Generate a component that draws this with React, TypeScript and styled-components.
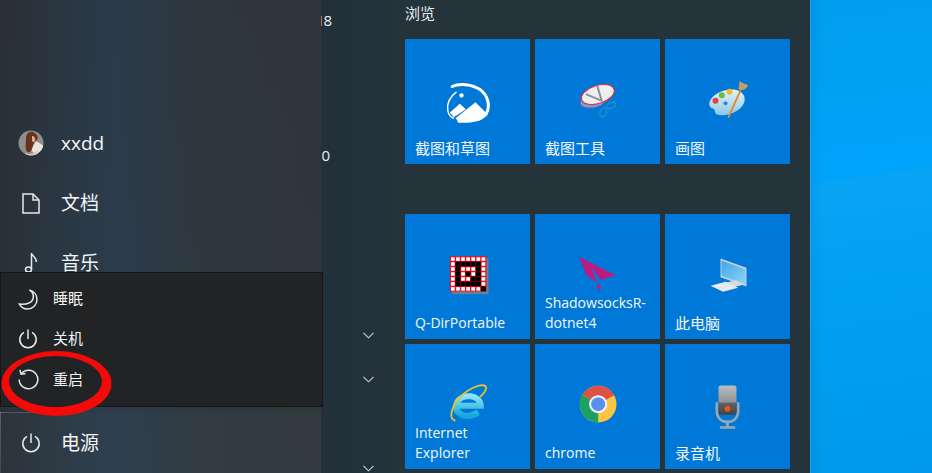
import React from "react";
import styled, { createGlobalStyle } from "styled-components";

const CJK = `"Noto Sans CJK SC"`;
const UI = `"Open Sans", ${CJK}, sans-serif`;

const Global = createGlobalStyle`
  html, body { margin: 0; padding: 0; background: #00a0f2; }
  body { overflow: hidden; font-family: ${UI}; color: #fff; }
`;

const Page = styled.div`
  position: relative;
  display: flex;
  width: 932px;
  height: 473px;
  overflow: hidden;
`;

const StartMenu = styled.div`
  display: flex;
  width: 810px;
  flex: none;
  background: #25333a;
`;

const Sidebar = styled.nav`
  display: flex;
  flex-direction: column;
  width: 321px;
  flex: none;
  padding-top: 113px;
  box-sizing: border-box;
  background:
    linear-gradient(180deg, rgba(36, 40, 44, 0.16) 0%, rgba(36, 50, 58, 0.1) 100%),
    linear-gradient(90deg, #2a3138 0%, #2b3a47 22%, #2c3e50 36%, #2f3a42 58%, #31383a 100%);
`;

const NavRow = styled.div<{ $focused?: boolean }>`
  position: relative;
  display: grid;
  grid-template-columns: 61px 1fr;
  align-items: center;
  height: 60px;
  font-size: 19px;
  line-height: 24px;
  color: #f4f6f7;
  ${(p) => (p.$focused ? "margin-top: auto; background: rgba(255,255,255,.015);" : "")}
  ${(p) =>
    p.$focused
      ? `&::before {
          content: "";
          position: absolute;
          inset: -1px auto auto 0;
          width: 95px;
          height: 61px;
          background:
            linear-gradient(90deg, rgba(255,255,255,.22), rgba(255,255,255,0)) 0 0 / 100% 1px no-repeat,
            linear-gradient(180deg, rgba(255,255,255,.22), rgba(255,255,255,.1)) 0 0 / 1px 100% no-repeat;
        }`
      : ""}
`;

const IconSlot = styled.span`
  display: flex;
  justify-content: center;
  align-items: center;
`;

const AppList = styled.div`
  display: flex;
  flex-direction: column;
  width: 69px;
  flex: none;
  overflow: hidden;
  background: linear-gradient(90deg, #21303a 0%, #24323a 100%);
`;

const AppRow = styled.div<{ $top: number }>`
  display: flex;
  align-items: center;
  height: 40px;
  flex: none;
  margin-top: ${(p) => p.$top}px;
`;

const ClippedText = styled.span<{ $shift: number; $tight?: boolean }>`
  margin-left: ${(p) => p.$shift}px;
  font-size: 15px;
  letter-spacing: ${(p) => (p.$tight ? "-1px" : "0")};
  color: #eef1f2;
  white-space: nowrap;
`;

const ChevronSlot = styled.span`
  display: flex;
  margin-left: 42px;
`;

const TilePane = styled.section`
  flex: 1;
  padding-left: 15px;
`;

const GroupTitle = styled.h2`
  margin: 0;
  height: 39px;
  font-size: 15px;
  font-weight: 400;
  line-height: 26px;
  color: #e8ecee;
`;

const TileGrid = styled.div<{ $top?: number }>`
  display: grid;
  grid-template-columns: repeat(3, 125px);
  grid-auto-rows: 125px;
  gap: 5px;
  margin-top: ${(p) => p.$top ?? 0}px;
`;

const Tile = styled.div`
  display: grid;
  background: #0078d7;
  & > * {
    grid-area: 1 / 1;
  }
`;

const TileIcon = styled.svg`
  width: 48px;
  height: 48px;
  place-self: center;
`;

const TileLabel = styled.div<{ $cjk?: boolean }>`
  align-self: end;
  padding: 0 6px 6px 10px;
  font-size: ${(p) => (p.$cjk ? 15 : 14)}px;
  line-height: 20px;
  color: #f6f9fc;
  word-break: break-word;
`;

const Desktop = styled.div`
  flex: 1;
  box-sizing: border-box;
  border-left: 1px solid #23a6ea;
  background:
    linear-gradient(90deg, rgba(0, 60, 130, 0.09), rgba(0, 60, 130, 0) 12px),
    linear-gradient(172.5deg, #009eed 0%, #00a4fb 37.4%, #0aa4f4 37.8%, #00a0f4 60%, #0099ea 100%);
`;

const PowerMenu = styled.div`
  position: absolute;
  left: 0;
  top: 272px;
  width: 323px;
  height: 135px;
  box-sizing: border-box;
  padding-top: 6px;
  background: #212325;
  border: 1px solid #131516;
`;

const PowerItem = styled.div`
  display: grid;
  grid-template-columns: 52px 1fr;
  align-items: center;
  height: 40px;
  font-size: 15px;
  line-height: 20px;
  color: #f2f3f4;
`;

const PowerLabel = styled.span`
  position: relative;
  top: -1px;
`;

const PowerIconSlot = styled.span`
  display: flex;
  justify-content: center;
  padding-left: 2px;
`;

const Annotation = styled.svg`
  position: absolute;
  left: 0;
  top: 348px;
  width: 116px;
  height: 70px;
  pointer-events: none;
`;

const Line = { fill: "none", stroke: "#e6e9ea", strokeWidth: 1.5 } as const;

const PowerGlyph = ({ size = 20 }: { size?: number }) => (
  <svg width={size} height={size} viewBox="0 0 20 20" style={Line}>
    <path d="M6 3.4A8.2 8.2 0 1 0 14 3.4" />
    <path d="M10 .6V10" />
  </svg>
);

const MoonGlyph = () => (
  <svg width="20" height="21" viewBox="0 0 20 21" style={Line}>
    <path d="M11.5 .9C14.6 3 16.2 6.2 15 9.900C13.6 14 9.300 15.600 1.400 15.100C3.200 18.300 6.200 20 9.500 20C14.800 20 19 15.800 19 10.500C19 6.100 16 2.200 11.500 .9Z" />
  </svg>
);

const RestartGlyph = () => (
  <svg width="21" height="21" viewBox="0 0 21 21" style={Line}>
    <path d="M3.300 4.600A9.300 9.300 0 1 1 1.200 10.500" />
    <path d="M1.800 .9L3.100 5.100L7.600 4.500" />
  </svg>
);

const DocGlyph = () => (
  <svg width="18" height="21" viewBox="0 0 18 21" style={Line}>
    <path d="M1 1H11L17 7V20H1Z" />
    <path d="M11 1V7H17" />
  </svg>
);

const NoteGlyph = () => (
  <svg width="14" height="22" viewBox="0 0 14 22" style={Line}>
    <path d="M7.500 17.500V1C8 4 12.500 5.500 12.500 10" />
    <ellipse cx="4.500" cy="17.500" rx="3" ry="2.500" />
  </svg>
);

const Chevron = () => (
  <svg width="11" height="7" viewBox="0 0 11 7" fill="none" stroke="#c9d0d4" strokeWidth="1.1">
    <path d="M.5 .8L5.500 5.800L10.500 .8" />
  </svg>
);

const Avatar = () => (
  <svg width="26" height="26" viewBox="0 0 26 26">
    <defs>
      <clipPath id="av">
        <circle cx="13" cy="13" r="12.500" />
      </clipPath>
    </defs>
    <g clipPath="url(#av)">
      <rect width="26" height="26" fill="#8e908c" />
      <path d="M19 26C23 23 26 19 26 16L18 11L13 20Z" fill="#ece6de" />
      <path d="M15 2C11 1 8 4 8 8C8 12 7 16 8 20C10 24 13 22 14 19C15 16 15 12 18 11C21 9 20 4 15 2Z" fill="#6a3020" />
      <path d="M14 6C16 6 18 8 17 11C16 13 14 12 14 10Z" fill="#e0ac92" />
      <path d="M7 23C12 25 16 24 20 20L22 26H7Z" fill="#e8c8b4" />
    </g>
  </svg>
);

const SnipIcon = () => (
  <TileIcon viewBox="130.500 232.500 144 144">
    <path d="M155 258C175 248 215 250 240 268C262 285 270 315 258 338C246 358 215 364 175 362" fill="none" stroke="#fff" strokeWidth="9" strokeLinecap="round" />
    <path d="M168 274C148 288 138 310 142 330C144 343 150 350 160 354" fill="none" stroke="#fff" strokeWidth="4.500" />
    <path d="M148 336L178 310L196 326L160 350Z" fill="#fff" />
    <path d="M225 305L262 342C248 358 215 364 172 361L165 353Z" fill="#fff" />
    <circle cx="183" cy="285" r="6.500" fill="#fff" />
  </TileIcon>
);

const ScissorsIcon = () => (
  <TileIcon viewBox="520.500 232.500 144 144">
    <ellipse cx="576" cy="304" rx="37" ry="18" transform="rotate(-8 576 304)" fill="#6aa5df" stroke="#8a5a9a" strokeWidth="2.500" />
    <ellipse cx="592" cy="282" rx="51" ry="27" transform="rotate(-18 592 282)" fill="#eceef0" stroke="#e8303a" strokeWidth="3.500" />
    <path d="M590 255L604 302M556 281L604 301" stroke="#8b9097" strokeWidth="6" fill="none" />
    <ellipse cx="608" cy="336" rx="9" ry="14" transform="rotate(20 608 336)" fill="none" stroke="#1590cf" strokeWidth="5" />
    <ellipse cx="632" cy="315" rx="15" ry="8" transform="rotate(-25 632 315)" fill="none" stroke="#1590cf" strokeWidth="5" />
  </TileIcon>
);

const PaletteIcon = () => (
  <TileIcon viewBox="910.500 232.500 144 144">
    <defs>
      <linearGradient id="pal" x1="0" y1="0" x2="0" y2="1">
        <stop offset="0" stopColor="#e4f2fa" />
        <stop offset="1" stopColor="#8ec8e8" />
      </linearGradient>
    </defs>
    <path d="M928 302C936 280 975 262 1005 268C1032 274 1040 296 1026 316C1012 336 975 350 950 342C940 338 945 326 938 324C928 322 924 312 928 302Z" fill="url(#pal)" />
    <circle cx="945" cy="301" r="9" fill="#e2413e" />
    <circle cx="964" cy="284" r="9" fill="#6fbb3e" />
    <circle cx="987" cy="274" r="9" fill="#f4b92e" />
    <circle cx="975" cy="308" r="6" fill="#2f86cf" />
    <path d="M984 350L1019 272" stroke="#e08a24" strokeWidth="5.500" strokeLinecap="round" />
    <path d="M1014 266L1017 241C1026 250 1036 250 1043 254C1038 264 1026 274 1014 266Z" fill="#c79a66" />
  </TileIcon>
);

const QDIR = ["WWWWWWW", "WKKKKKW", "WKWWWKW", "WKWKWKW", "WKWWKKW", "WKKKKKW", "WWWWWWK"];

const QDirIcon = () => (
  <TileIcon viewBox="130.500 127.500 144 144">
    <rect x="154" y="143" width="110" height="108" fill="#6d7f92" />
    <rect x="148" y="137" width="110" height="106" fill="#f0101c" />
    {QDIR.map((row, y) =>
      row.split("").map((c, x) =>
        c === "W" ? (
          <rect key={`${x}-${y}`} x={151.5 + x * 15.3} y={140.5 + y * 14.9} width="11" height="10.500" fill="#fff" />
        ) : (
          <rect key={`${x}-${y}`} x={149.5 + x * 15.3} y={138.5 + y * 14.9} width="15" height="14.500" fill="#000" />
        )
      )
    )}
  </TileIcon>
);

const PlaneIcon = () => (
  <TileIcon viewBox="520.500 127.500 144 144">
    <path d="M536 139L646 195L600 208L570 166L590 216L558 195Z" fill="#bd1a82" />
    <path d="M587 226L600 219L598 243Z" fill="#bd1a82" />
  </TileIcon>
);

const ComputerIcon = () => (
  <TileIcon viewBox="910.500 127.500 144 144">
    <defs>
      <linearGradient id="scr" x1="0" y1="0" x2="1" y2="1">
        <stop offset="0" stopColor="#3fa6ec" />
        <stop offset="1" stopColor="#8fd4f6" />
      </linearGradient>
    </defs>
    <path d="M960 144L1038 172V228L960 200Z" fill="#c6d0d8" />
    <path d="M963 150L1035 176V222L963 196Z" fill="url(#scr)" />
    <path d="M978 216L1006 209L1032 222L1004 229Z" fill="#d5dce1" />
    <path d="M930 226L976 214L1013 232L968 244Z" fill="#e6eaee" />
  </TileIcon>
);

const IeIcon = () => (
  <TileIcon viewBox="130.500 517.500 144 144">
    <defs>
      <linearGradient id="ie" x1="0" y1="0" x2="0" y2="1">
        <stop offset="0" stopColor="#8be4f7" />
        <stop offset="1" stopColor="#16a6dc" />
      </linearGradient>
    </defs>
    <path d="M170 586H241C239 552 186 548 170 574C156 602 186 632 234 606" fill="none" stroke="url(#ie)" strokeWidth="18" />
    <path d="M163 630C145 628 150 590 180 558C210 530 245 518 256 528C260 535 250 550 240 558" fill="none" stroke="#e6c230" strokeWidth="5.500" strokeLinecap="round" />
  </TileIcon>
);

const ChromeIcon = () => (
  <TileIcon viewBox="520.500 517.500 144 144">
    <circle cx="593" cy="581" r="55" fill="#fbc443" />
    <path d="M593 581L545.400 553.500A55 55 0 0 1 640.600 553.500Z" fill="#de5246" />
    <path d="M593 581L545.400 553.500A55 55 0 0 0 593 636Z" fill="#1ba260" />
    <path d="M593 581L640.600 553.500H593Z" fill="#de5246" />
    <circle cx="593" cy="581" r="27" fill="#f4f6f8" />
    <circle cx="593" cy="581" r="21" fill="#5b8ff0" />
  </TileIcon>
);

const MicIcon = () => (
  <TileIcon viewBox="910.500 517.500 144 144">
    <defs>
      <linearGradient id="mic" x1="0" y1="0" x2="0" y2="1">
        <stop offset="0" stopColor="#b9bdc1" />
        <stop offset=".55" stopColor="#8f9499" />
        <stop offset=".62" stopColor="#5c6064" />
        <stop offset="1" stopColor="#3f4347" />
      </linearGradient>
    </defs>
    <path d="M949 575V600C949 625 965 634 981 634C997 634 1013 625 1013 600V575" fill="none" stroke="#9aa7b0" strokeWidth="8" />
    <rect x="954" y="525" width="54" height="88" rx="7" fill="url(#mic)" />
    <circle cx="981" cy="595" r="9" fill="#ea5514" />
    <path d="M981 634V650M958 651H1004" stroke="#9aa7b0" strokeWidth="8" fill="none" />
  </TileIcon>
);

type TileData = { label: string; icon: React.ReactNode; cjk?: boolean };

const firstGroup: TileData[] = [
  { label: "截图和草图", icon: <SnipIcon />, cjk: true },
  { label: "截图工具", icon: <ScissorsIcon />, cjk: true },
  { label: "画图", icon: <PaletteIcon />, cjk: true },
];

const secondGroup: TileData[] = [
  { label: "Q-DirPortable", icon: <QDirIcon /> },
  { label: "ShadowsocksR-dotnet4", icon: <PlaneIcon /> },
  { label: "此电脑", icon: <ComputerIcon />, cjk: true },
  { label: "Internet Explorer", icon: <IeIcon /> },
  { label: "chrome", icon: <ChromeIcon /> },
  { label: "录音机", icon: <MicIcon />, cjk: true },
];

const renderTile = (t: TileData) => (
  <Tile key={t.label}>
    {t.icon}
    <TileLabel $cjk={t.cjk}>{t.label}</TileLabel>
  </Tile>
);

export default function App() {
  return (
    <Page>
      <Global />
      <StartMenu>
        <Sidebar>
          <NavRow>
            <IconSlot><Avatar /></IconSlot>
            <span>xxdd</span>
          </NavRow>
          <NavRow>
            <IconSlot><DocGlyph /></IconSlot>
            <span>文档</span>
          </NavRow>
          <NavRow>
            <IconSlot><NoteGlyph /></IconSlot>
            <span>音乐</span>
          </NavRow>
          <NavRow $focused>
            <IconSlot><PowerGlyph /></IconSlot>
            <span>电源</span>
          </NavRow>
        </Sidebar>
        <AppList>
          <AppRow $top={0}><ClippedText $shift={-5} $tight>18</ClippedText></AppRow>
          <AppRow $top={95}><ClippedText $shift={-8}>10</ClippedText></AppRow>
          <AppRow $top={140}><ChevronSlot><Chevron /></ChevronSlot></AppRow>
          <AppRow $top={4}><ChevronSlot><Chevron /></ChevronSlot></AppRow>
          <AppRow $top={49}><ChevronSlot><Chevron /></ChevronSlot></AppRow>
        </AppList>
        <TilePane>
          <GroupTitle>浏览</GroupTitle>
          <TileGrid>{firstGroup.map(renderTile)}</TileGrid>
          <TileGrid $top={50}>{secondGroup.map(renderTile)}</TileGrid>
        </TilePane>
      </StartMenu>
      <Desktop />
      <PowerMenu>
        <PowerItem>
          <PowerIconSlot><MoonGlyph /></PowerIconSlot>
          <PowerLabel>睡眠</PowerLabel>
        </PowerItem>
        <PowerItem>
          <PowerIconSlot><PowerGlyph /></PowerIconSlot>
          <PowerLabel>关机</PowerLabel>
        </PowerItem>
        <PowerItem>
          <PowerIconSlot><RestartGlyph /></PowerIconSlot>
          <span>重启</span>
        </PowerItem>
      </PowerMenu>
      <Annotation viewBox="0 348 116 70">
        <path
          fillRule="evenodd"
          fill="#f50a0a"
          d="M1.500 383.500A55 32.500 0 1 0 111.500 383.500A55 32.500 0 1 0 1.500 383.500ZM9 381.500A46.500 25.500 0 1 1 102 381.500A46.500 25.500 0 1 1 9 381.500Z"
        />
      </Annotation>
    </Page>
  );
}
